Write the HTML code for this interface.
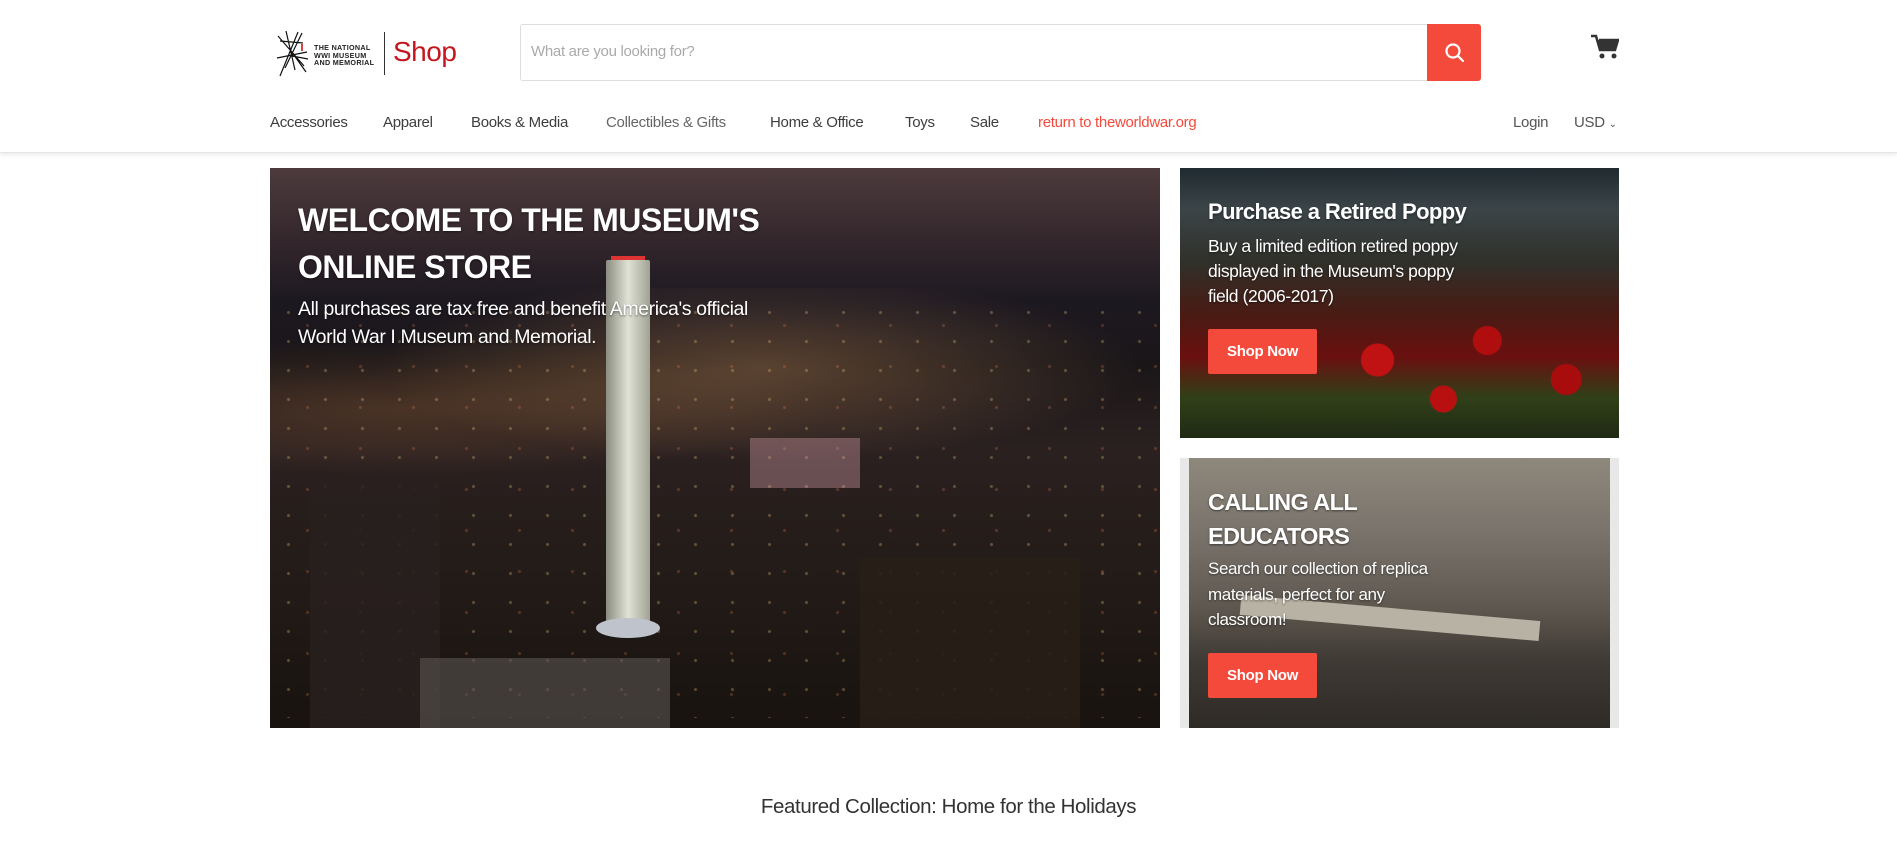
<!DOCTYPE html>
<html><head><meta charset="utf-8"><style>
*{margin:0;padding:0;box-sizing:border-box}
body{width:1897px;height:847px;overflow:hidden;background:#fff;font-family:"Liberation Sans",sans-serif;position:relative}
.a{position:absolute;white-space:nowrap}
.nav{top:114px;font-size:15px;color:#3d3d3d;letter-spacing:-0.3px}
.hdr{position:absolute;left:0;top:0;width:1897px;height:153px;border-bottom:1px solid #e6e6e6;box-shadow:0 2px 4px rgba(0,0,0,.08)}
.btn{position:absolute;background:#f44a3b;color:#fff;font-weight:bold;font-size:15px;width:109px;height:45px;line-height:45px;text-align:center;border-radius:2px;letter-spacing:-0.3px}
.wt{color:#fff;text-shadow:0 1px 2px rgba(0,0,0,.5)}
</style></head><body>
<div class="hdr"></div>
<!-- logo -->
<svg class="a" style="left:276px;top:30px" width="34" height="47" viewBox="0 0 34 47" stroke="#111" stroke-width="1.2" fill="none">
<path d="M2 6L28 36M1 28L31 22M10 1L19 40M22 2L4 46M26 3L9 38M13 18L30 42M4 11L27 13M16 26L32 29"/>
<path d="M26 14L26 21" stroke="#c00" stroke-width="1.5"/>
</svg>
<div class="a" style="left:314px;top:44px;font-size:7.2px;line-height:7.5px;font-weight:bold;color:#222;letter-spacing:.3px">THE NATIONAL<br>WWI MUSEUM<br>AND MEMORIAL</div>
<div class="a" style="left:384px;top:32px;width:1px;height:43px;background:#333"></div>
<div class="a" style="left:393px;top:36px;font-size:28px;color:#c4161c;letter-spacing:-0.5px">Shop</div>
<!-- search -->
<div class="a" style="left:520px;top:24px;width:961px;height:57px;border:1px solid #ddd;border-radius:3px"></div>
<div class="a" style="left:531px;top:43px;font-size:15px;color:#aaa;letter-spacing:-0.3px">What are you looking for?</div>
<div class="a" style="left:1427px;top:24px;width:54px;height:57px;background:#f44a3b;border-radius:0 3px 3px 0"></div>
<svg class="a" style="left:1443px;top:41px" width="24" height="24" viewBox="0 0 24 24" fill="none" stroke="#fff" stroke-width="2.2"><circle cx="10" cy="10" r="6.5"/><path d="M15 15l5 5" stroke-linecap="round"/></svg>
<!-- cart -->
<svg class="a" style="left:1591px;top:34px" width="28" height="26" viewBox="0 0 28 26"><path d="M0 2h5l4 14h15l3-10H8" fill="none" stroke="#333" stroke-width="2.5"/><path d="M7 6h20l-3 10H10z" fill="#333"/><circle cx="11" cy="22" r="2.5" fill="#333"/><circle cx="23" cy="22" r="2.5" fill="#333"/></svg>
<!-- nav -->
<div class="a nav" style="left:270px">Accessories</div>
<div class="a nav" style="left:383px">Apparel</div>
<div class="a nav" style="left:471px">Books &amp; Media</div>
<div class="a nav" style="left:606px;color:#666">Collectibles &amp; Gifts</div>
<div class="a nav" style="left:770px">Home &amp; Office</div>
<div class="a nav" style="left:905px">Toys</div>
<div class="a nav" style="left:970px">Sale</div>
<div class="a nav" style="left:1038px;color:#f44a3b">return to theworldwar.org</div>
<div class="a nav" style="left:1513px;color:#555">Login</div>
<div class="a nav" style="left:1574px;color:#555">USD <span style="font-size:10px">&#8964;</span></div>
<!-- hero -->
<div class="a" style="left:270px;top:168px;width:890px;height:560px;overflow:hidden;background:linear-gradient(180deg,#4d3b3d 0%,#35282d 12%,#1c1820 24%,#1a1618 35%,#2a2020 50%,#241c18 70%,#18130f 100%)">
 <div class="a" style="left:0;top:120px;width:890px;height:200px;background:radial-gradient(ellipse at 55% 40%,rgba(255,180,110,.28),transparent 55%),radial-gradient(ellipse at 15% 60%,rgba(255,160,80,.18),transparent 40%)"></div>
 <div class="a" style="left:0;top:130px;width:890px;height:420px;background:radial-gradient(circle,rgba(255,210,140,.55) 0 1px,transparent 2px) 0 0/37px 29px,radial-gradient(circle,rgba(255,140,90,.45) 0 1px,transparent 2px) 11px 7px/53px 41px;opacity:.55"></div>
 <div class="a" style="left:480px;top:270px;width:110px;height:50px;background:rgba(230,170,180,.35)"></div>
 <div class="a" style="left:40px;top:310px;width:130px;height:250px;background:rgba(40,32,30,.85)"></div>
 <div class="a" style="left:590px;top:390px;width:220px;height:170px;background:rgba(40,30,24,.85)"></div>
 <div class="a" style="left:150px;top:490px;width:250px;height:70px;background:rgba(90,85,80,.6)"></div>
 <div class="a" style="left:341px;top:88px;width:34px;height:6px;background:#d33"></div>
 <div class="a" style="left:336px;top:92px;width:44px;height:365px;background:linear-gradient(90deg,#8a8c80,#e0e2d6,#a0a294);border-radius:2px"></div>
 <div class="a" style="left:326px;top:450px;width:64px;height:20px;background:#bfc3cc;border-radius:50%"></div>
</div>
<div class="a wt" style="left:298px;top:197px;font-size:32px;line-height:47px;font-weight:bold;letter-spacing:-0.5px">WELCOME TO THE MUSEUM'S<br>ONLINE STORE</div>
<div class="a wt" style="left:298px;top:295px;font-size:19.5px;line-height:28px;letter-spacing:-0.4px">All purchases are tax free and benefit America's official<br>World War I Museum and Memorial.</div>
<!-- poppy panel -->
<div class="a" style="left:1180px;top:168px;width:439px;height:270px;overflow:hidden;background:linear-gradient(180deg,#1f2a30 0%,#3b4548 15%,#30302a 35%,#4a1a12 55%,#6a1010 70%,#304018 85%,#1f2a14 100%)">
 <div class="a" style="left:0;top:140px;width:439px;height:130px;background:radial-gradient(circle at 20% 30%,#b01010 0 12px,transparent 13px),radial-gradient(circle at 45% 40%,#c01212 0 16px,transparent 17px),radial-gradient(circle at 70% 25%,#b00e0e 0 14px,transparent 15px),radial-gradient(circle at 88% 55%,#a80c0c 0 15px,transparent 16px),radial-gradient(circle at 60% 70%,#b81010 0 13px,transparent 14px)"></div>
</div>
<div class="a wt" style="left:1208px;top:199px;font-size:22px;font-weight:bold;letter-spacing:-0.6px">Purchase a Retired Poppy</div>
<div class="a wt" style="left:1208px;top:234px;font-size:17.5px;line-height:25px;letter-spacing:-0.4px">Buy a limited edition retired poppy<br>displayed in the Museum's poppy<br>field (2006-2017)</div>
<div class="btn" style="left:1208px;top:329px">Shop Now</div>
<!-- educators panel -->
<div class="a" style="left:1180px;top:458px;width:439px;height:270px;overflow:hidden;background:linear-gradient(180deg,#8e887c 0%,#77716a 30%,#5e5850 55%,#3f3a34 75%,#2e2a26 100%)">
 <div class="a" style="left:0;top:0;width:9px;height:270px;background:#e8e8e6"></div>
 <div class="a" style="left:430px;top:0;width:9px;height:270px;background:#e8e8e6"></div>
 <div class="a" style="left:60px;top:150px;width:300px;height:20px;background:#b8b2a4;transform:rotate(5deg)"></div>
</div>
<div class="a wt" style="left:1208px;top:485px;font-size:23.5px;line-height:34px;font-weight:bold;letter-spacing:-0.6px">CALLING ALL<br>EDUCATORS</div>
<div class="a wt" style="left:1208px;top:556px;font-size:17px;line-height:25.5px;letter-spacing:-0.4px">Search our collection of replica<br>materials, perfect for any<br>classroom!</div>
<div class="btn" style="left:1208px;top:653px">Shop Now</div>
<div class="a" style="left:0;top:795px;width:1897px;text-align:center;font-size:20.5px;color:#333;letter-spacing:-0.4px">Featured Collection: Home for the Holidays</div>
</body></html>
